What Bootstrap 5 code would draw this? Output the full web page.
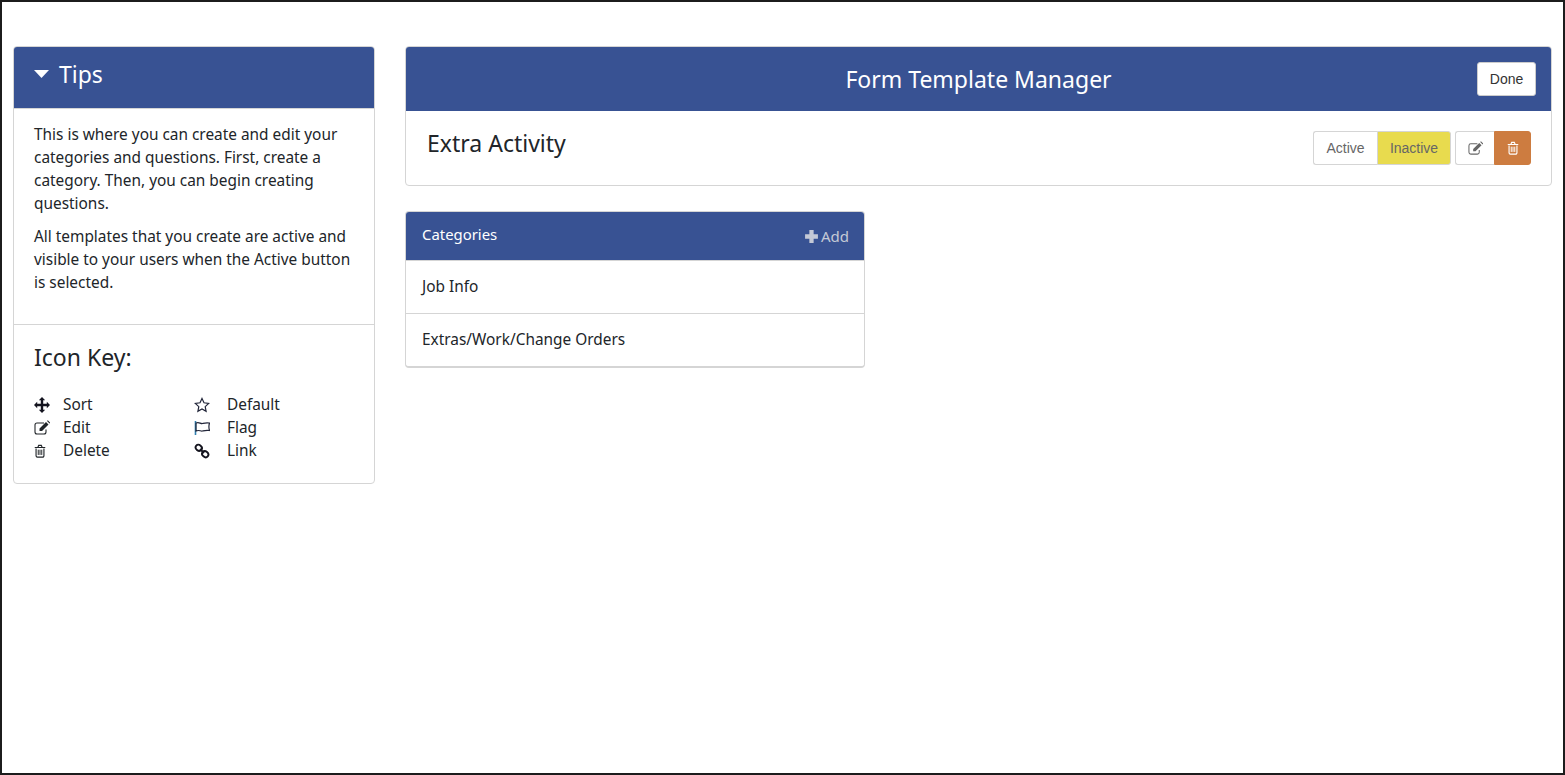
<!DOCTYPE html>
<html lang="en">
<head>
    <meta charset="UTF-8">
    <meta name="viewport" content="width=device-width, initial-scale=1.0">
    <title>Form Template Manager</title>
    <link href="https://cdn.jsdelivr.net/npm/bootstrap@5.3.0/dist/css/bootstrap.min.css" rel="stylesheet">
    <style>
        html, body { height: 100%; }
        body {
            font-family: "Noto Sans", "Open Sans", sans-serif;
            font-size: 15.4px;
            line-height: 23px;
            color: #212529;
            background: #fff;
        }
        .page-frame {
            height: 775px;
            border: 2px solid #1c1c1c;
            padding: 44px 11px 0 11px;
            gap: 30px;
        }
        .tips-col { width: 362px; flex: none; }
        .main-col { flex: 1 1 auto; min-width: 0; }
        .panel-box { border: 1px solid #d5d5d5; border-radius: 4px; overflow: hidden; background: #fff; }
        .panel-head { background: #385293; color: #fff; }
        .tips-head { height: 62px; padding: 0 20px 7px; font-size: 23px; border-bottom: 1px solid #d5d5d5; }
        .caret-down { width: 15px; height: 8px; margin-right: 10px; fill: #fff; }
        .tips-text { padding: 14px 20px 20px; }
        .tips-text p { margin-bottom: 10px; }
        .key-box { border-top: 1px solid #d5d5d5; padding: 17px 20px 21px; }
        .key-title { font-size: 23px; line-height: 30px; font-weight: 400; margin-bottom: 21px; }
        .key-col { width: 160px; }
        .key-item { height: 23px; }
        .key-icon { width: 29px; flex: none; }
        .key-col + .key-col .key-icon { width: 33px; }
        .key-icon svg { display: block; width: 16px; height: 16px; }
        .key-icon svg.trash-shift { width: 14px; height: 14px; margin-left: -1px; }
        .manager-head { height: 64px; padding: 0 15px 0 74px; }
        .manager-title { flex: 1; text-align: center; font-size: 23px; }
        .done-btn {
            font-family: "Liberation Sans", sans-serif;
            font-size: 14px;
            background: #fff;
            border: 1px solid #ccc;
            border-radius: 3px;
            width: 59px;
            height: 34px;
            padding: 0;
            color: #333;
        }
        .manager-body { height: 74px; padding: 20px 20px 0 21px; }
        .activity-name { font-size: 23px; line-height: 24px; font-weight: 400; margin: 0; }
        .seg-btn {
            font-family: "Liberation Sans", sans-serif;
            font-size: 14px;
            height: 34px;
            padding: 0;
            background: #fff;
            border: 1px solid #d5d5d5;
            color: #666;
        }
        .seg-active { width: 64px; border-radius: 3px 0 0 3px; border-right: 0; }
        .seg-inactive { width: 74px; background: #e8db4e; border-radius: 0 3px 3px 0; }
        .seg-edit { width: 39px; border-radius: 3px 0 0 3px; border-right: 0; margin-left: 4px; }
        .seg-trash { width: 37px; background: #cd7c40; border-color: #cd7c40; border-radius: 0 3px 3px 0; }
        .seg-btn svg { width: 15px; height: 15px; display: block; margin: 0 auto; }
        .seg-trash svg { width: 14px; height: 14px; }
        .cat-box { width: 460px; margin-top: 25px; border-bottom-width: 2px; }
        .cat-head { height: 48px; padding: 0 15px 3px 16px; font-size: 14.9px; }
        .cat-add { color: #c4c9d6; font-size: 15px; padding-top: 3px; }
        .cat-add svg { width: 15px; height: 15px; fill: #c4c9d6; margin-right: 2px; }
        .cat-row { height: 53px; padding: 0 16px 2px; border-top: 1px solid #d5d5d5; }
        .cat-row:first-of-type { border-top: 0; }
    </style>
</head>
<body>
    <svg width="0" height="0" class="position-absolute">
        <symbol id="ic-move" viewBox="0 0 16 16"><path d="M8 0l3.200 3.200H9.200v3.600h3.600v-2L16 8l-3.200 3.200v-2H9.200v3.600h2L8 16l-3.200-3.200h2V9.200H3.200v2L0 8l3.200-3.200v2h3.600V3.200h-2z" fill="#14141f"/></symbol>
        <symbol id="ic-edit" viewBox="0 0 16 16"><path d="M12 9.500V12a2 2 0 0 1-2 2H3a2 2 0 0 1-2-2V5a2 2 0 0 1 2-2h7" fill="none" stroke="currentColor" stroke-width="1.100"/><path d="M5.500 8.500L12 2l2.500 2.500L8 11H5.500zM13 1l.8-.7 2.500 2.500-.8.8z" fill="currentColor"/></symbol>
        <symbol id="ic-trash" viewBox="0 0 16 16"><path d="M3.500 5v8.500a1.500 1.500 0 0 0 1.500 1.500h6a1.500 1.500 0 0 0 1.500-1.500V5M2 4h12M5.500 4l1-2.500h3l1 2.500" fill="none" stroke="currentColor" stroke-width="1.300"/><path d="M6 6.500v6M8 6.500v6M10 6.500v6" stroke="currentColor" stroke-width="1.100"/></symbol>
        <symbol id="ic-star" viewBox="0 0 16 16"><path d="M8 1.500l2 4.300 4.700.6-3.500 3.200.9 4.700L8 12l-4.100 2.300.9-4.700L1.300 6.400 6 5.800z" fill="none" stroke="#22263a" stroke-width="1.200"/></symbol>
        <symbol id="ic-flag" viewBox="0 0 16 16"><path d="M1.500 1v14" stroke="#2f7fb0" stroke-width="1.600"/><path d="M2 3c3-1.500 4.500 1 6.500.5s3.500-1 7-.5c-.8 2.500-.8 5 0 7.500-3.500-.5-5 0-7 .5S5 9.500 2 11z" fill="none" stroke="#22263a" stroke-width="1.200"/></symbol>
        <symbol id="ic-link" viewBox="0 0 16 16"><g fill="none" stroke="#15151f" stroke-width="1.900"><ellipse cx="4.800" cy="4.800" rx="3.300" ry="2.800" transform="rotate(40 4.800 4.800)"/><ellipse cx="11.200" cy="11.200" rx="3.300" ry="2.800" transform="rotate(40 11.200 11.200)"/><path d="M6 6l4 4"/></g></symbol>
        <symbol id="ic-plus" viewBox="0 0 14 14"><path d="M5 1h4v4h4v4H9v4H5V9H1V5h4z"/></symbol>
    </svg>

    <div class="page-frame d-flex align-items-start">
        <aside class="tips-col panel-box">
            <div class="panel-head tips-head d-flex align-items-center">
                <svg class="caret-down" viewBox="0 0 15 8"><path d="M0 0h15L7.500 8z"/></svg>
                <span>Tips</span>
            </div>
            <div class="tips-text">
                <p>This is where you can create and edit your categories and questions. First, create a category. Then, you can begin creating questions.</p>
                <p>All templates that you create are active and visible to your users when the Active button is selected.</p>
            </div>
            <div class="key-box">
                <h4 class="key-title">Icon Key:</h4>
                <div class="d-flex">
                    <div class="key-col">
                        <div class="key-item d-flex align-items-center"><span class="key-icon"><svg><use href="#ic-move"/></svg></span>Sort</div>
                        <div class="key-item d-flex align-items-center"><span class="key-icon text-dark"><svg><use href="#ic-edit"/></svg></span>Edit</div>
                        <div class="key-item d-flex align-items-center"><span class="key-icon text-dark"><svg class="trash-shift"><use href="#ic-trash"/></svg></span>Delete</div>
                    </div>
                    <div class="key-col">
                        <div class="key-item d-flex align-items-center"><span class="key-icon"><svg><use href="#ic-star"/></svg></span>Default</div>
                        <div class="key-item d-flex align-items-center"><span class="key-icon"><svg><use href="#ic-flag"/></svg></span>Flag</div>
                        <div class="key-item d-flex align-items-center"><span class="key-icon"><svg><use href="#ic-link"/></svg></span>Link</div>
                    </div>
                </div>
            </div>
        </aside>

        <main class="main-col">
            <div class="panel-box">
                <div class="panel-head manager-head d-flex align-items-center">
                    <div class="manager-title">Form Template Manager</div>
                    <button type="button" class="done-btn">Done</button>
                </div>
                <div class="manager-body d-flex justify-content-between align-items-start">
                    <h3 class="activity-name">Extra Activity</h3>
                    <div class="d-flex">
                        <button type="button" class="seg-btn seg-active">Active</button>
                        <button type="button" class="seg-btn seg-inactive">Inactive</button>
                        <button type="button" class="seg-btn seg-edit"><svg><use href="#ic-edit"/></svg></button>
                        <button type="button" class="seg-btn seg-trash text-white"><svg><use href="#ic-trash"/></svg></button>
                    </div>
                </div>
            </div>

            <div class="panel-box cat-box">
                <div class="panel-head cat-head d-flex justify-content-between align-items-center">
                    <span>Categories</span>
                    <span class="cat-add d-flex align-items-center"><svg><use href="#ic-plus"/></svg>Add</span>
                </div>
                <div class="cat-row d-flex align-items-center">Job Info</div>
                <div class="cat-row d-flex align-items-center">Extras/Work/Change Orders</div>
            </div>
        </main>
    </div>

    <script src="https://cdn.jsdelivr.net/npm/bootstrap@5.3.0/dist/js/bootstrap.bundle.min.js"></script>
</body>
</html>
